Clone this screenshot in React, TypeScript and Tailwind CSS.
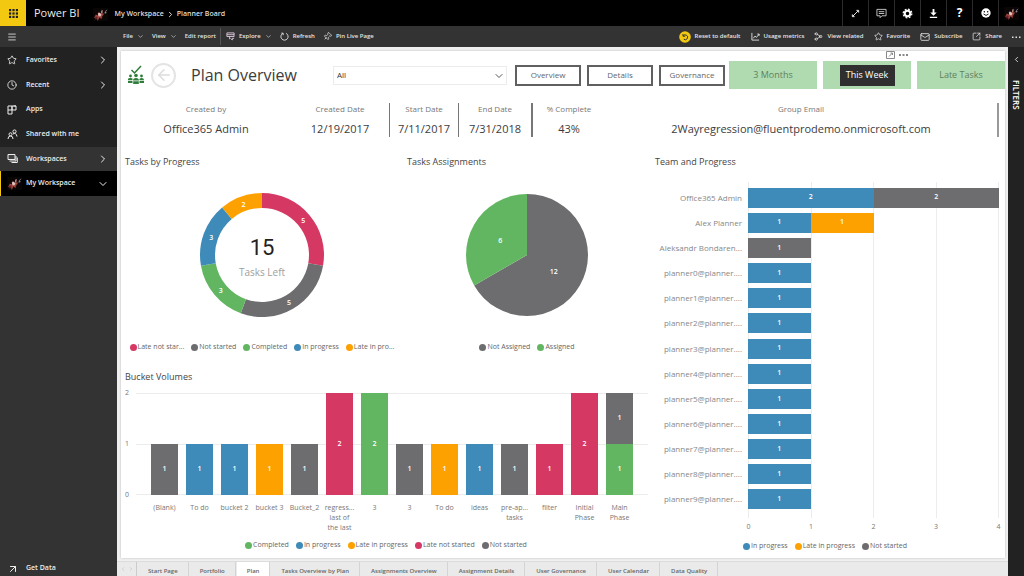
import type { ReactNode } from "react";
import {
  ArrowLeft,
  ArrowUpRight,
  ChevronDown,
  ChevronLeft,
  ChevronRight,
  Clock,
  Mail,
  Menu,
  Pin,
  Share2,
  SquareArrowOutUpRight,
  Star,
} from "lucide-react";

const COLORS = {
  late: "#d63864",
  notStarted: "#6d6d70",
  completed: "#62b661",
  inProgress: "#3e8ab8",
  lateInProgress: "#fda100",
};

type Status = keyof typeof COLORS;

type Segment = { status: Status; value: number };

type LegendItem = { status: Status; label: string };

const kpis = [
  { label: "Created by", value: "Office365 Admin", line: "" },
  { label: "Created Date", value: "12/19/2017", line: "border-r border-[#777]" },
  { label: "Start Date", value: "7/11/2017", line: "border-r border-[#777]" },
  { label: "End Date", value: "7/31/2018", line: "border-r-2 border-[#777]" },
  { label: "% Complete", value: "43%", line: "" },
  { label: "Group Email", value: "2Wayregression@fluentprodemo.onmicrosoft.com", line: "border-r-2 border-[#999]" },
];

const progress: Segment[] = [
  { status: "late", value: 5 },
  { status: "notStarted", value: 5 },
  { status: "completed", value: 3 },
  { status: "inProgress", value: 3 },
  { status: "lateInProgress", value: 2 },
];

const assignments: Segment[] = [
  { status: "notStarted", value: 12 },
  { status: "completed", value: 6 },
];

// segments go from the bottom of the column up
const buckets: { name: string[]; segments: Segment[] }[] = [
  { name: ["(Blank)"], segments: [{ status: "notStarted", value: 1 }] },
  { name: ["To do"], segments: [{ status: "inProgress", value: 1 }] },
  { name: ["bucket 2"], segments: [{ status: "inProgress", value: 1 }] },
  { name: ["bucket 3"], segments: [{ status: "lateInProgress", value: 1 }] },
  { name: ["Bucket_2"], segments: [{ status: "notStarted", value: 1 }] },
  { name: ["regress...", "last of", "the last"], segments: [{ status: "late", value: 2 }] },
  { name: ["3"], segments: [{ status: "completed", value: 2 }] },
  { name: ["3"], segments: [{ status: "notStarted", value: 1 }] },
  { name: ["To do"], segments: [{ status: "lateInProgress", value: 1 }] },
  { name: ["ideas"], segments: [{ status: "inProgress", value: 1 }] },
  { name: ["pre-ap...", "tasks"], segments: [{ status: "notStarted", value: 1 }] },
  { name: ["filter"], segments: [{ status: "late", value: 1 }] },
  { name: ["Initial", "Phase"], segments: [{ status: "late", value: 2 }] },
  {
    name: ["Main", "Phase"],
    segments: [
      { status: "completed", value: 1 },
      { status: "notStarted", value: 1 },
    ],
  },
];

const team: { name: string; segments: Segment[] }[] = [
  {
    name: "Office365 Admin",
    segments: [
      { status: "inProgress", value: 2 },
      { status: "notStarted", value: 2 },
    ],
  },
  {
    name: "Alex Planner",
    segments: [
      { status: "inProgress", value: 1 },
      { status: "lateInProgress", value: 1 },
    ],
  },
  { name: "Aleksandr Bondaren...", segments: [{ status: "notStarted", value: 1 }] },
  ...[0, 1, 2, 3, 4, 5, 6, 7, 8, 9].map((n) => ({
    name: `planner${n}@planner....`,
    segments: [{ status: "inProgress" as Status, value: 1 }],
  })),
];

const tabs = [
  "Start Page",
  "Portfolio",
  "Plan",
  "Tasks Overview by Plan",
  "Assignments Overview",
  "Assignment Details",
  "User Governance",
  "User Calendar",
  "Data Quality",
];

function Avatar() {
  return (
    <svg viewBox="0 0 16 14" className="h-[13px] w-[15px] shrink-0">
      <rect width="16" height="14" fill="#0b0606" />
      <path d="M1 11 3 7l2 1 1-4 2 2 2-4v4l2 0-2 3-1 3-2-2-2 4-1-4z" fill="#a0463f" />
      <path d="m5 6 2-1 2 2-1 2-2 0zM9 3l1-1 0 3-1 0z" fill="#dcc3c0" />
      <path d="m3 9 2 1-1 2-2 0zM9 9l1 1-1 2z" fill="#6c1f26" />
      <path d="M13 6q0-3 2-4M12.500 5h2" stroke="#a39cab" strokeWidth="0.8" fill="none" />
    </svg>
  );
}

function TopBar() {
  const cell = "flex h-full w-[26px] items-center justify-center border-l border-[#2b2b2b]";
  return (
    <header className="flex h-[26px] items-center bg-black text-white">
      <button aria-label="Apps" className="flex h-full w-[26px] items-center justify-center bg-[#f2c811]">
        <svg viewBox="0 0 9 9" className="size-[9px]" fill="#222">
          {[0, 3.4, 6.8].map((y) =>
            [0, 3.4, 6.8].map((x) => <rect key={`${x}-${y}`} x={x} y={y} width="2.200" height="2.200" />)
          )}
        </svg>
      </button>
      <span className="ml-2 text-[11px] text-[#ececec]">Power BI</span>
      <nav className="ml-[14px] flex items-center pt-[2px] text-[7px] font-semibold text-[#dedede]">
        <Avatar />
        <a href="#workspace" className="ml-[6px]">My Workspace</a>
        <ChevronRight className="mx-[2px] size-[9px]" strokeWidth={2.5} />
        <a href="#board">Planner Board</a>
      </nav>
      <div className="ml-auto flex h-full">
        <button aria-label="Full screen" className={cell}>
          <svg viewBox="0 0 10 10" className="size-[9px]" fill="none" stroke="#fff">
            <path d="M2 8 8 2M6 1.500h2.500V4M1.500 6v2.500H4" />
          </svg>
        </button>
        <button aria-label="Notifications" className={cell}>
          <svg viewBox="0 0 12 12" className="size-[11px]" fill="none" stroke="#ccc">
            <path d="M1 1.500h10v7H6.500L4.500 10.500v-2H1zM3 4h6M3 6h6" />
          </svg>
        </button>
        <button aria-label="Settings" className={cell}>
          <svg viewBox="0 0 12 12" className="size-[11px]" fill="none" stroke="#fff">
            <circle cx="6" cy="6" r="3" strokeWidth="2.200" />
            <circle cx="6" cy="6" r="4.700" strokeWidth="1.400" strokeDasharray="2 1.690" />
          </svg>
        </button>
        <button aria-label="Download" className={cell}>
          <svg viewBox="0 0 12 12" className="size-[11px]" fill="#fff">
            <path d="M5 1h2v4h2.500L6 8.500 2.500 5H5zM2 9.500h8V11H2z" />
          </svg>
        </button>
        <button aria-label="Help" className={`${cell} text-[12px] font-bold`}>?</button>
        <button aria-label="Feedback" className={cell}>
          <svg viewBox="0 0 12 12" className="size-[10px]">
            <circle cx="6" cy="6" r="5.600" fill="#fff" />
            <circle cx="4" cy="4.600" r="0.900" />
            <circle cx="8" cy="4.600" r="0.900" />
            <path d="M3 7.200q3 3.400 6 0" stroke="#000" strokeWidth="1.100" fill="none" />
          </svg>
        </button>
        <button aria-label="Account" className={cell}>
          <Avatar />
        </button>
      </div>
    </header>
  );
}

function ToolButton({ icon, children }: { icon?: ReactNode; children: ReactNode }) {
  return (
    <button className="flex items-center gap-[4px] whitespace-nowrap">
      {icon}
      {children}
    </button>
  );
}

function Toolbar() {
  return (
    <div className="flex h-[21px] items-center bg-[#333] text-[6px] font-semibold text-[#e4e4e4]">
      <button aria-label="Toggle menu" className="flex w-[123px] pl-[7px]">
        <Menu className="size-[10px]" />
      </button>
      <div className="flex h-full items-center gap-[8px]">
        <ToolButton>File <ChevronDown className="size-[7px]" /></ToolButton>
        <ToolButton>View <ChevronDown className="size-[7px]" /></ToolButton>
        <ToolButton>Edit report</ToolButton>
      </div>
      <div className="ml-[4px] flex h-full items-center gap-[8px] py-[2px]">
        <span className="-mr-[3px] h-full w-px bg-[#555]" />
        <ToolButton
          icon={
            <svg viewBox="0 0 10 10" className="size-[9px]" fill="none" stroke="#dcc8dc">
              <path d="M1 1h8v4H1zM1 3h8M4 5v3M5 7l2 2V7l2 0" />
            </svg>
          }
        >
          Explore <ChevronDown className="size-[7px]" />
        </ToolButton>
        <ToolButton
          icon={
            <svg viewBox="0 0 10 10" className="size-[9px]" fill="none" stroke="currentColor">
              <path d="M3.200 1.500a4 4 0 1 0 3.600 0M3.500 3.500V1.300H1.500" />
            </svg>
          }
        >
          Refresh
        </ToolButton>
        <ToolButton icon={<Pin className="size-[9px] rotate-45" />}>Pin Live Page</ToolButton>
      </div>
      <div className="ml-auto flex items-center gap-[10px] pr-[3px]">
        <ToolButton
          icon={
            <svg viewBox="0 0 12 12" className="size-[12px]">
              <circle cx="6" cy="6" r="5.800" fill="#f2c811" />
              <path d="M4 3v2.200h2.200M4.200 5a2.400 2.400 0 1 1 .6 3.200" stroke="#333" fill="none" />
            </svg>
          }
        >
          Reset to default
        </ToolButton>
        <ToolButton
          icon={
            <svg viewBox="0 0 10 10" className="size-[9px]" fill="none" stroke="currentColor">
              <path d="M1 1v8h8M2.500 7l2-2.500 1.500 1.500L9 2.500M7 2.300h2v2" />
            </svg>
          }
        >
          Usage metrics
        </ToolButton>
        <ToolButton icon={<Share2 className="size-[9px] rotate-180" />}>View related</ToolButton>
        <ToolButton icon={<Star className="size-[9px]" />}>Favorite</ToolButton>
        <ToolButton icon={<Mail className="size-[10px]" />}>Subscribe</ToolButton>
        <ToolButton icon={<SquareArrowOutUpRight className="size-[9px]" />}>Share</ToolButton>
        <button aria-label="More options">
          <svg viewBox="0 0 9 2" className="h-[2px] w-[9px]" fill="currentColor">
            <path d="M0 .5h1.500V2H0zM3.500.5H5V2H3.500zM7 .5h1.500V2H7z" />
          </svg>
        </button>
      </div>
    </div>
  );
}

function SideItem({ icon, label, end, tone }: { icon: ReactNode; label: string; end?: ReactNode; tone?: string }) {
  return (
    <a href={`#${label}`} className={`flex items-center pr-[8px] ${tone ?? "pl-[7px]"}`}>
      <span className="flex w-[19px] items-center">{icon}</span>
      <span className="flex-1">{label}</span>
      {end}
    </a>
  );
}

function Sidebar() {
  const right = <ChevronRight className="size-[12px]" />;
  return (
    <aside className="flex w-[117px] shrink-0 flex-col bg-[#333] text-[7px] font-semibold text-[#ececec]">
      <nav className="grid h-[149px] grid-rows-6 bg-[#222] pt-px">
        <SideItem icon={<Star className="size-[10px]" />} label="Favorites" end={right} />
        <SideItem icon={<Clock className="size-[10px]" />} label="Recent" end={right} />
        <SideItem
          icon={
            <svg viewBox="0 0 10 10" className="size-[10px]" fill="none" stroke="currentColor">
              <path d="M1 1h4v8H1zM1 5h8V1H6.500M5 5V1h4" />
            </svg>
          }
          label="Apps"
        />
        <SideItem
          icon={
            <svg viewBox="0 0 11 11" className="size-[11px]" fill="none" stroke="currentColor">
              <circle cx="3.500" cy="5.300" r="1.500" />
              <path d="M1 10q0-3 2.500-3T6 10" />
              <circle cx="7.500" cy="2.500" r="1.600" />
              <path d="M6 5q3-2 4 2.500" />
            </svg>
          }
          label="Shared with me"
        />
        <SideItem
          tone="bg-[#333] pl-[7px]"
          icon={
            <svg viewBox="0 0 11 11" className="size-[11px]" fill="none" stroke="currentColor">
              <path d="M1 1.500h7v5H1z" fill="#444" />
              <path d="M9 3v5H2.500M10.300 4.500v5H4.500" />
            </svg>
          }
          label="Workspaces"
          end={right}
        />
        <SideItem
          tone="border-l border-[#f2c811] bg-black pl-[6px]"
          icon={<Avatar />}
          label="My Workspace"
          end={<ChevronDown className="size-[12px]" />}
        />
      </nav>
      <a href="#get-data" className="mt-auto flex h-[15px] items-center pl-[7px]">
        <span className="w-[19px]"><ArrowUpRight className="size-[12px]" /></span>
        Get Data
      </a>
    </aside>
  );
}

function PlannerLogo() {
  return (
    <svg viewBox="0 0 18 20" className="h-[20px] w-[18px]" fill="#2f7d3b">
      <path d="m4.500 5 3 3L14 1" fill="none" stroke="#2f7d3b" strokeWidth="1.500" />
      <circle cx="3.500" cy="11" r="1.400" />
      <circle cx="9" cy="10.500" r="1.800" />
      <circle cx="14.500" cy="11" r="1.400" />
      <path d="M1 14q0-1 2.500-1t2 1v1H1zM6 15.500q0-2.500 3-2.500t3 2.500zM12.500 15v-1q.5-1 2-1 2.500 0 2.500 2z" />
      <path d="M1 15.800h4.500V18H1zM6.200 16.200h5.600V19H6.200zM12.500 15.800H17V18h-4.500z" />
    </svg>
  );
}

function ReportHeader() {
  const outlined = "h-[21px] w-[66px] border-2 border-[#606060] bg-white text-[8px] text-[#666]";
  const green = "h-[28px] w-full bg-[#b0dbb0] text-[9px] text-[#5f7f60]";
  return (
    <div className="flex items-center">
      <div className="flex w-[212px] shrink-0 items-center pl-[6px]">
        <PlannerLogo />
        <button
          aria-label="Back"
          className="ml-[6px] flex size-[25px] items-center justify-center rounded-full border-2 border-[#e4e4e4] text-[#dcdcdc]"
        >
          <ArrowLeft className="size-[18px]" strokeWidth={2} />
        </button>
        <h1 className="ml-[15px] whitespace-nowrap text-[16px] leading-[20px] text-[#3c3c3c]">Plan Overview</h1>
      </div>
      <div className="relative mr-[8px] flex-1">
        <select
          aria-label="Plan"
          className="block h-[19px] w-full appearance-none border border-[#ececec] bg-white pl-[3px] text-[8px] text-[#333]"
        >
          <option>All</option>
        </select>
        <ChevronDown className="pointer-events-none absolute right-[2px] top-[4px] size-[12px] text-[#555]" />
      </div>
      <div className="flex gap-[6px]">
        <button className={outlined}>Overview</button>
        <button className={outlined}>Details</button>
        <button className={outlined}>Governance</button>
      </div>
      <div className="ml-[4px] flex gap-[6px]">
        <div className="w-[88px]">
          <button className={`block ${green}`}>3 Months</button>
        </div>
        <div className="relative w-[88px]">
          <div className="flex h-[28px] items-center justify-center bg-[#b0dbb0]">
            <button className="h-[21px] w-[55px] bg-[#2f2f2f] text-[9px] text-white">This Week</button>
          </div>
          <div className="absolute -top-[10px] right-[3px] flex items-center gap-[4px] text-[#888]">
            <svg viewBox="0 0 9 8" className="h-[8px] w-[9px]" fill="none" stroke="currentColor">
              <path d="M.5.5h8v7h-8zM3 5.500 6.500 2M4.500 2h2v2" />
            </svg>
            <svg viewBox="0 0 9 2" className="h-[2px] w-[9px]" fill="currentColor">
              <path d="M0 0h2v2H0zM3.500 0h2v2h-2zM7 0h2v2H7z" />
            </svg>
          </div>
        </div>
        <div className="w-[88px]">
          <button className={`block ${green}`}>Late Tasks</button>
        </div>
      </div>
    </div>
  );
}

function KpiRow() {
  return (
    <dl className="mr-[6px] mt-[14px] grid grid-cols-[170fr_99fr_69fr_74fr_72fr_394fr] text-center">
      {kpis.map((kpi) => (
        <div key={kpi.label} className={kpi.line}>
          <dt className="text-[8px] leading-[12px] text-[#777]">{kpi.label}</dt>
          <dd className="mt-[6px] whitespace-nowrap text-[11px] leading-[16px] text-[#3c3c3c]">{kpi.value}</dd>
        </div>
      ))}
    </dl>
  );
}

function ChartTitle({ children }: { children: ReactNode }) {
  return <h2 className="pl-[4px] text-[9px] leading-[14px] text-[#444]">{children}</h2>;
}

function Legend({ items }: { items: LegendItem[] }) {
  return (
    <ul className="flex gap-[7px] whitespace-nowrap text-[7px] leading-[10px] text-[#666]">
      {items.map((item) => (
        <li key={item.label} className="flex items-center gap-px">
          <span className="size-[7px] rounded-full" style={{ background: COLORS[item.status] }} />
          {item.label}
        </li>
      ))}
    </ul>
  );
}

function point(angle: number, r: number) {
  return [r * Math.sin(angle), -r * Math.cos(angle)];
}

function RoundChart({ data, outer, inner, labelAt, title }: {
  data: Segment[];
  outer: number;
  inner: number;
  labelAt: number;
  title: string;
}) {
  const total = data.reduce((sum, d) => sum + d.value, 0);
  let from = 0;
  return (
    <svg viewBox="-63 -63 126 126" className="size-[126px]" role="img" aria-label={title}>
      {data.map((d) => {
        const to = from + (d.value / total) * Math.PI * 2;
        const [x1, y1] = point(from, outer);
        const [x2, y2] = point(to, outer);
        const [x3, y3] = point(to, inner);
        const [x4, y4] = point(from, inner);
        const large = to - from > Math.PI ? 1 : 0;
        const [lx, ly] = point((from + to) / 2, labelAt);
        from = to;
        return (
          <g key={d.status}>
            <path
              d={`M${x1} ${y1}A${outer} ${outer} 0 ${large} 1 ${x2} ${y2}L${x3} ${y3}A${inner} ${inner} 0 ${large} 0 ${x4} ${y4}Z`}
              fill={COLORS[d.status]}
            />
            <text x={lx} y={ly + 3} textAnchor="middle" className="fill-white text-[7px] font-semibold">
              {d.value}
            </text>
          </g>
        );
      })}
    </svg>
  );
}

function BucketChart() {
  return (
    <div className="mt-[9px] flex pl-[4px] pr-[3px]">
      <div className="-my-[5px] flex h-[112px] w-[11px] flex-col justify-between text-[7px] leading-[10px] text-[#777]">
        <span>2</span>
        <span>1</span>
        <span>0</span>
      </div>
      <div className="flex-1">
        <div className="relative h-[102px]">
          <div className="absolute inset-0 flex flex-col justify-between">
            <span className="h-px bg-[#ececec]" />
            <span className="h-px bg-[#ececec]" />
            <span className="h-px bg-[#ececec]" />
          </div>
          <div className="relative grid h-full grid-cols-14 px-[11px]">
            {buckets.map((bucket, i) => (
              <div key={i} className="flex flex-col-reverse px-[4px]">
                {bucket.segments.map((s) => (
                  <div
                    key={s.status}
                    className="flex items-center justify-center text-[7px] font-semibold text-white"
                    style={{ height: `${s.value * 50}%`, background: COLORS[s.status] }}
                  >
                    {s.value}
                  </div>
                ))}
              </div>
            ))}
          </div>
        </div>
        <div className="mt-[8px] grid grid-cols-14 px-[11px] text-center text-[7px] leading-[10px] text-[#777]">
          {buckets.map((bucket, i) => (
            <div key={i} className="whitespace-nowrap">
              {bucket.name.map((line) => (
                <div key={line}>{line}</div>
              ))}
            </div>
          ))}
        </div>
      </div>
    </div>
  );
}

function TeamChart() {
  return (
    <>
      <div className="relative mt-[13px] flex flex-1 flex-col pb-[6px] pt-[3px]">
        <div className="absolute inset-y-0 left-[97px] right-[6px] flex justify-between">
          {[0, 1, 2, 3, 4].map((n) => (
            <span key={n} className="w-px bg-[#ececec]" />
          ))}
        </div>
        {team.map((member) => (
          <div key={member.name} className="relative flex flex-1 items-center pr-[6px]">
            <span className="w-[91px] whitespace-nowrap text-right text-[8px] leading-[10px] text-[#888]">{member.name}</span>
            <div className="ml-[6px] flex h-[20px] flex-1">
              {member.segments.map((s) => (
                <div
                  key={s.status}
                  className="flex items-center justify-center text-[7px] font-semibold text-white"
                  style={{ width: `${s.value * 25}%`, background: COLORS[s.status] }}
                >
                  {s.value}
                </div>
              ))}
            </div>
          </div>
        ))}
      </div>
      <div className="ml-[97px] mr-[6px] mt-[4px] flex justify-between text-[7px] leading-[10px] text-[#777]">
        {[0, 1, 2, 3, 4].map((n) => (
          <span key={n} className="flex w-px justify-center">{n}</span>
        ))}
      </div>
    </>
  );
}

function Report() {
  return (
    <main className="flex flex-1 flex-col bg-white pb-[7px] pt-[10px] shadow-[0_0_2px_#bbb]">
      <ReportHeader />
      <KpiRow />
      <div className="mt-[18px] grid flex-1 grid-cols-[530fr_354fr]">
        <div className="flex flex-col">
          <div className="grid grid-cols-[282fr_248fr]">
            <section className="flex flex-col">
              <ChartTitle>Tasks by Progress</ChartTitle>
              <div className="relative mt-[23px] flex justify-center">
                <RoundChart data={progress} outer={62} inner={47} labelAt={54} title="Tasks by Progress" />
                <div className="absolute inset-0 flex flex-col items-center justify-center pt-[4px] text-[#222]">
                  <strong className="font-['Roboto','Liberation_Sans',sans-serif] text-[22px] font-normal leading-[26px]">15</strong>
                  <span className="mt-[4px] text-[10px] leading-[14px] text-[#a0a0a0]">Tasks Left</span>
                </div>
              </div>
              <div className="mt-[24px] flex justify-center">
                <Legend
                  items={[
                    { status: "late", label: "Late not star..." },
                    { status: "notStarted", label: "Not started" },
                    { status: "completed", label: "Completed" },
                    { status: "inProgress", label: "In progress" },
                    { status: "lateInProgress", label: "Late in pro..." },
                  ]}
                />
              </div>
            </section>
            <section className="flex flex-col">
              <ChartTitle>Tasks Assignments</ChartTitle>
              <div className="mt-[23px] flex justify-center">
                <RoundChart data={assignments} outer={61} inner={0} labelAt={31} title="Tasks Assignments" />
              </div>
              <div className="mt-[24px] flex justify-center">
                <Legend
                  items={[
                    { status: "notStarted", label: "Not Assigned" },
                    { status: "completed", label: "Assigned" },
                  ]}
                />
              </div>
            </section>
          </div>
          <section className="mt-[18px]">
            <ChartTitle>Bucket Volumes</ChartTitle>
            <BucketChart />
            <div className="mt-[7px] flex justify-center">
              <Legend
                items={[
                  { status: "completed", label: "Completed" },
                  { status: "inProgress", label: "In progress" },
                  { status: "lateInProgress", label: "Late in progress" },
                  { status: "late", label: "Late not started" },
                  { status: "notStarted", label: "Not started" },
                ]}
              />
            </div>
          </section>
        </div>
        <section className="flex flex-col">
          <ChartTitle>Team and Progress</ChartTitle>
          <TeamChart />
          <div className="ml-[92px] mt-[9px]">
            <Legend
              items={[
                { status: "inProgress", label: "In progress" },
                { status: "lateInProgress", label: "Late in progress" },
                { status: "notStarted", label: "Not started" },
              ]}
            />
          </div>
        </section>
      </div>
    </main>
  );
}

function PageTabs() {
  return (
    <div className="flex h-[15px] items-stretch gap-px border-t border-[#dcdcdc] bg-[#eaeaea] text-[6px] font-semibold text-[#666]">
      <div className="flex w-[20px] items-center justify-center gap-[2px] border-r border-[#ccc] text-[#bbb]">
        <button aria-label="Previous page"><ChevronLeft className="size-[6px]" /></button>
        <button aria-label="Next page"><ChevronRight className="size-[6px]" /></button>
      </div>
      {tabs.map((tab) => (
        <button
          key={tab}
          className={`whitespace-nowrap border-r border-[#d4d4d4] px-[10px] pt-[5px] ${tab === "Plan" ? "bg-white" : ""}`}
        >
          {tab}
        </button>
      ))}
    </div>
  );
}

export default function App() {
  return (
    <div className="flex min-h-screen flex-col font-['Open_Sans','Noto_Sans',sans-serif]">
      <TopBar />
      <Toolbar />
      <div className="flex flex-1">
        <Sidebar />
        <div className="flex min-w-0 flex-1 flex-col bg-[#f0f0f0]">
          <div className="flex flex-1 flex-col pb-[3px] pl-[4px] pr-[3px] pt-[4px]">
            <Report />
          </div>
          <PageTabs />
        </div>
        <aside className="flex w-[16px] shrink-0 flex-col items-center bg-[#222] pt-[8px] text-white">
          <button aria-label="Expand filters"><ChevronLeft className="size-[9px]" /></button>
          <span className="mt-[16px] text-[8px] font-semibold leading-[10px] [writing-mode:vertical-rl]">FILTERS</span>
        </aside>
      </div>
    </div>
  );
}
